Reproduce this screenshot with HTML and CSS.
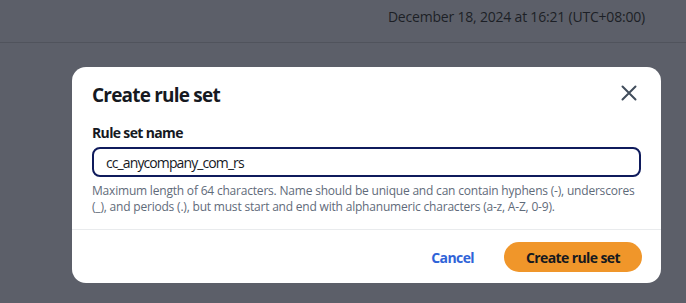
FILE: index.html
```html
<!DOCTYPE html>
<html lang="en">
<head>
<meta charset="utf-8">
<title>Create rule set</title>
<link rel="stylesheet" href="styles.css">
</head>
<body>
  <header class="topbar">
    <span class="timestamp">December 18, 2024 at 16:21 (UTC+08:00)</span>
  </header>
  <main class="overlay">
    <section class="modal" role="dialog" aria-labelledby="modal-title">
      <div class="modal-header">
        <h2 id="modal-title" class="modal-title">Create rule set</h2>
        <button class="close-btn" aria-label="Close">
          <svg width="16" height="16" viewBox="0 0 16 16" aria-hidden="true">
            <path d="M1.5 1.5 L14.5 14.5 M14.5 1.5 L1.5 14.5" stroke="#414d5c" stroke-width="2" stroke-linecap="round" fill="none"/>
          </svg>
        </button>
      </div>
      <div class="modal-body">
        <label class="field-label" for="rs-name">Rule set name</label>
        <input id="rs-name" class="text-input" type="text" value="cc_anycompany_com_rs">
        <p class="hint">Maximum length of 64 characters. Name should be unique and can contain hyphens (-), underscores (_), and periods (.), but must start and end with alphanumeric characters (a-z, A-Z, 0-9).</p>
      </div>
      <div class="modal-footer">
        <button class="btn-link">Cancel</button>
        <button class="btn-primary">Create rule set</button>
      </div>
    </section>
  </main>
</body>
</html>
```

FILE: styles.css
```css
* { box-sizing: border-box; }
html, body {
  margin: 0;
  padding: 0;
  background: #5c5f69;
  font-family: "Open Sans", "Noto Sans", sans-serif;
  color: #16191f;
}
.topbar {
  height: 43px;
  border-bottom: 1px solid #50535c;
  display: flex;
  justify-content: flex-end;
  align-items: flex-start;
  padding: 7px 41px 0 0;
}
.timestamp {
  font-size: 14px;
  line-height: 20px;
  color: #1c1f26;
  letter-spacing: -0.2px;
}
.overlay {
  padding: 24px 0 0 72px;
}
.modal {
  width: 589px;
  height: 216px;
  background: #ffffff;
  border-radius: 14px;
  display: flex;
  flex-direction: column;
}
.modal-header {
  display: flex;
  justify-content: space-between;
  align-items: flex-start;
  padding: 16px 24px 0 20px;
}
.modal-title {
  margin: 0;
  font-size: 19px;
  line-height: 24px;
  font-weight: 700;
  letter-spacing: -0.8px;
  color: #16191f;
}
.close-btn {
  border: 0;
  background: none;
  padding: 0;
  margin-top: 2px;
  width: 16px;
  height: 16px;
  display: flex;
}
.modal-body {
  padding: 17px 20px 0 20px;
  display: flex;
  flex-direction: column;
}
.field-label {
  font-size: 14px;
  line-height: 18px;
  font-weight: 700;
  color: #16191f;
  letter-spacing: -0.65px;
}
.text-input {
  margin-top: 5px;
  width: 549px;
  height: 30px;
  border: 2px solid #0f1b5c;
  border-radius: 8px;
  padding: 0 12px;
  font-family: inherit;
  font-size: 14px;
  color: #16191f;
  letter-spacing: -0.9px;
  outline: none;
}
.hint {
  margin: 6px 0 0 0;
  font-size: 12px;
  line-height: 16px;
  color: #5f6b7a;
  letter-spacing: -0.2px;
}
.modal-footer {
  margin-top: auto;
  border-top: 1px solid #e9ebed;
  display: flex;
  justify-content: flex-end;
  align-items: center;
  gap: 30px;
  padding: 12px 19px 11px 0;
}
.btn-link {
  border: 0;
  background: none;
  padding: 0;
  font-family: inherit;
  font-size: 14px;
  font-weight: 700;
  color: #2f63d8;
  letter-spacing: -0.6px;
}
.btn-primary {
  height: 30px;
  width: 138px;
  border: 0;
  border-radius: 15px;
  background: #f0962a;
  font-family: inherit;
  font-size: 14px;
  font-weight: 700;
  color: #16191f;
  letter-spacing: -0.6px;
}
```
